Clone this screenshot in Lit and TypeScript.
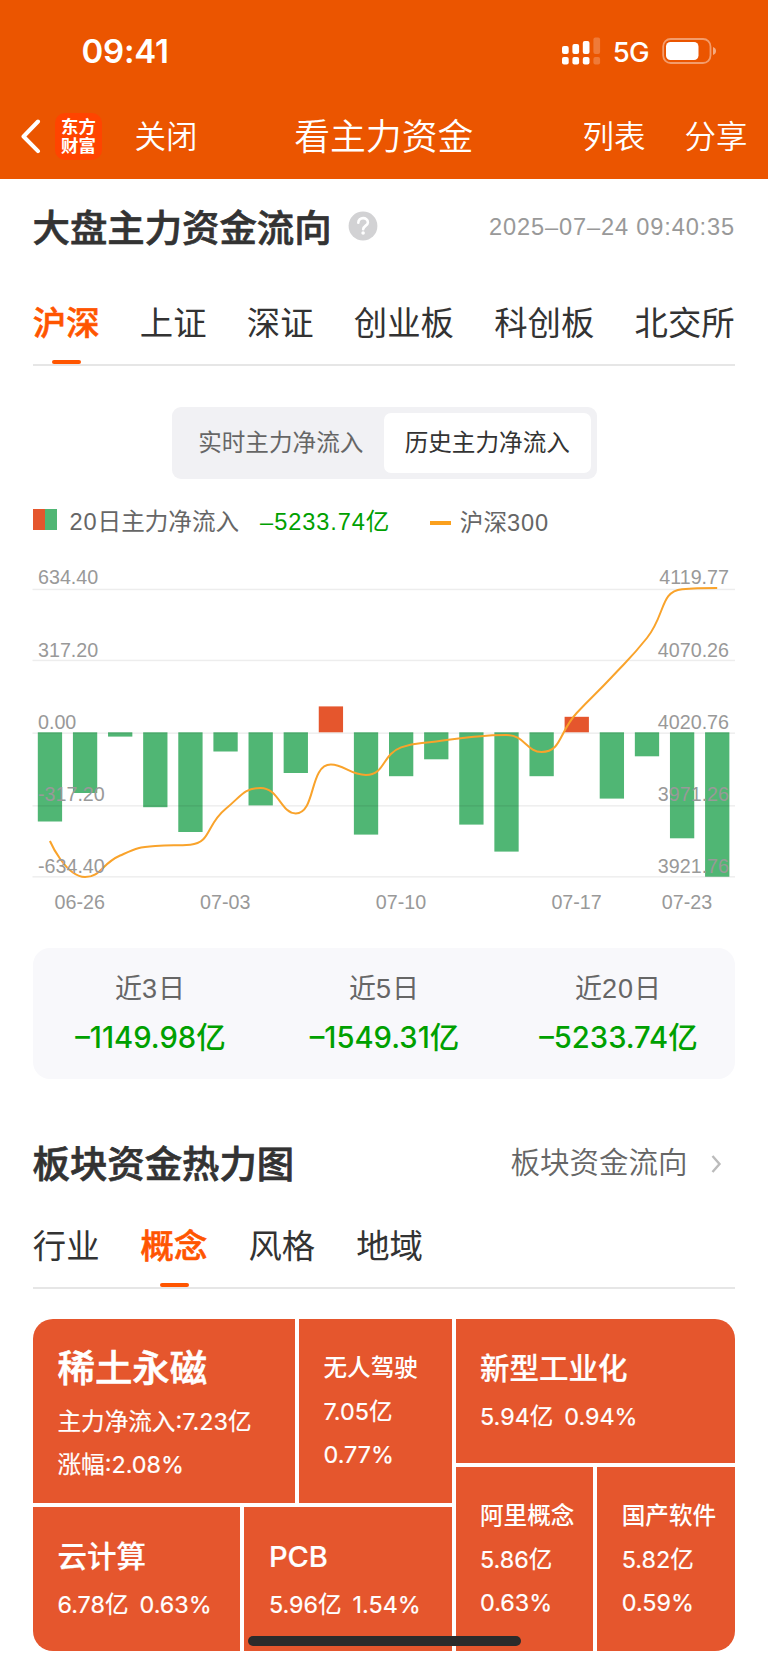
import { LitElement, html, svg, css } from "lit";
import { customElement, property } from "lit/decorators.js";

/** Splits a string so that Latin runs get their own face next to the Chinese text. */
const mix = (text: string) =>
  text
    .split(/([0-9.:%A-Z–]+)/)
    .filter((s) => s !== "")
    .map((s) => (/^[0-9.:%A-Z–]/.test(s) ? html`<span class="n">${s}</span>` : s));

const shared = css`
  * { box-sizing: border-box; }
  .n { font-family: Inter, "Liberation Sans", sans-serif; font-size: 0.985em; line-height: 0; }
`;

@customElement("status-bar")
class StatusBar extends LitElement {
  static styles = [shared, css`
    :host { display: flex; align-items: center; justify-content: space-between; height: 102px; padding: 0 51px 0 81.5px; color: #fff; font-family: Inter, sans-serif; }
    .time { font-size: 33px; font-weight: 600; line-height: 40px; letter-spacing: -0.2px; }
    .right { display: flex; align-items: center; }
    .net { font-size: 27.5px; font-weight: 500; line-height: 34px; margin: 2px 13px 0 12px; letter-spacing: -0.6px; }
    svg { display: block; }
  `];
  render() {
    return html`
      <div class="time">09:41</div>
      <div class="right">
        <svg width="39" height="28" viewBox="0 0 39 28" fill="#fff">
          <rect x="0" y="9" width="6.7" height="8" rx="2" />
          <rect x="10.4" y="7" width="6.7" height="10" rx="2" />
          <rect x="20.8" y="4" width="6.7" height="13" rx="2" />
          <rect x="31.4" y="0.6" width="6.7" height="16.4" rx="2" opacity=".22" />
          <rect x="0" y="20" width="6.7" height="7.6" rx="2" />
          <rect x="10.4" y="20" width="6.7" height="7.6" rx="2" />
          <rect x="20.8" y="20" width="6.7" height="7.6" rx="2" />
          <rect x="31.4" y="20" width="6.7" height="7.6" rx="2" opacity=".22" />
        </svg>
        <span class="net">5G</span>
        <svg width="55" height="26" viewBox="0 0 55 26">
          <rect x="1.2" y="1" width="47.3" height="24" rx="7.5" fill="none" stroke="#fff" stroke-opacity=".42" stroke-width="1.8" />
          <rect x="4" y="4" width="32.5" height="18" rx="4.5" fill="#fff" />
          <path d="M51 9v8c2-.6 3-2.300 3-4s-1-3.400-3-4z" fill="#fff" opacity=".5" />
        </svg>
      </div>
    `;
  }
}

@customElement("nav-bar")
class NavBar extends LitElement {
  static styles = [shared, css`
    :host { display: grid; grid-template-columns: 1fr auto 1fr; align-items: center; height: 68px; padding: 0 20.5px 0 21px; color: #fff; font-size: 31.5px; font-weight: 350; line-height: 46px; }
    .side { display: flex; align-items: center; }
    .end { justify-content: flex-end; gap: 39px; }
    .logo { display: grid; place-content: center; width: 47px; height: 47px; margin: 0 32.5px 0 13px; border-radius: 10px; background: #ff4400; font-size: 17.400px; font-weight: 700; line-height: 19.5px; padding-bottom: 2px; }
    .title { font-size: 35.8px; margin-left: -1px; }
    .t { padding-bottom: 4px; }
    svg { display: block; }
  `];
  render() {
    return html`
      <div class="side">
        <svg width="21" height="36" viewBox="0 0 21 36" fill="none" stroke="#fff" stroke-width="4" stroke-linecap="round" stroke-linejoin="round"><path d="M17 3.500 2.500 18.500 17 33.200" /></svg>
        <div class="logo"><span>东方</span><span>财富</span></div>
        <span class="t">关闭</span>
      </div>
      <div class="title t">看主力资金</div>
      <div class="side end"><span class="t">列表</span><span class="t">分享</span></div>
    `;
  }
}

@customElement("tab-row")
class TabRow extends LitElement {
  @property({ type: Array }) items: string[] = [];
  @property({ type: Number }) active = 0;
  @property({ type: Boolean, reflect: true }) spread = false;
  static styles = [shared, css`
    :host { display: flex; gap: 41px; height: 84px; border-bottom: 2px solid #e6e6e6; font-size: 33.400px; color: #333; }
    :host([spread]) { gap: 0; justify-content: space-between; }
    .tab { display: flex; flex-direction: column; align-items: center; justify-content: space-between; height: 82px; line-height: 78px; white-space: nowrap; }
    .label { height: 70px; margin: 0 0.2px 0 -0.2px; }
    .on { color: #ff5500; font-weight: 500; -webkit-text-stroke: 0.6px #ff5500; }
    .bar { width: 29px; height: 4px; border-radius: 2px; background: #ff5500; }
  `];
  render() {
    return this.items.map(
      (t, i) => html`<div class="tab ${i === this.active ? "on" : ""}"><span class="label">${t}</span>${i === this.active ? html`<i class="bar"></i>` : ""}</div>`
    );
  }
}

type Pt = [number, number];

/** Smooth path whose control points never overshoot the neighbouring values. */
function smoothPath(p: Pt[]): string {
  const clamp = (v: number, a: number, b: number) => Math.max(Math.min(a, b), Math.min(Math.max(a, b), v));
  const k = 0.5;
  let d = `M${p[0][0]},${p[0][1]}`;
  let c0: Pt = p[0];
  for (let i = 1; i < p.length; i++) {
    const prev = p[i - 1], cur = p[i], next = p[i + 1];
    let c1: Pt = cur;
    let n0: Pt = cur;
    if (next) {
      const lp = Math.hypot(cur[0] - prev[0], cur[1] - prev[1]);
      const ln = Math.hypot(next[0] - cur[0], next[1] - cur[1]);
      const r = ln / (ln + lp);
      n0 = [0, 1].map((a) => clamp(cur[a] + (next[a] - prev[a]) * k * r, next[a], cur[a])) as Pt;
      c1 = [0, 1].map((a) => clamp(cur[a] - ((n0[a] - cur[a]) * lp) / ln, prev[a], cur[a])) as Pt;
      n0 = [0, 1].map((a) => cur[a] + ((cur[a] - c1[a]) * ln) / lp) as Pt;
    }
    d += `C${c0.join()} ${c1.join()} ${cur.join()}`;
    c0 = n0;
  }
  return d;
}

@customElement("flow-chart")
class FlowChart extends LitElement {
  // Bar ends and line points, in chart pixels below the top edge (y = 0 of the drawing).
  private zero = 182.3;
  private bars = [271.5, 243, 186.6, 257.2, 282, 201.5, 255.4, 223, 156.4, 284.6, 226.2, 209.3, 274.6, 301.6, 226.2, 166.8, 248.6, 206.3, 288.3, 326.7];
  private line = [291, 327, 305.5, 296, 294.700, 259, 238, 263.4, 214.6, 225, 197.4, 191.6, 187, 185, 202, 163, 127, 88, 39.2, 38];
  static styles = css`
    :host { display: block; height: 370px; }
    svg { display: block; overflow: visible; }
    text { font: 19.7px "Liberation Sans", Arial, sans-serif; fill: #999; }
  `;
  render() {
    const x = (i: number) => 4.8 + 35.12 * i;
    const rows = [39.3, 110.3, 183, 255.7, 326.700];
    const left = ["634.40", "317.20", "0.00", "-317.20", "-634.40"];
    const right = ["4119.77", "4070.26", "4020.76", "3971.26", "3921.76"];
    const base = [34, 106.5, 179, 250.700, 323];
    const dates: [number, string][] = [[46.7, "06-26"], [192.3, "07-03"], [368, "07-10"], [543.6, "07-17"], [654, "07-23"]];
    return html`<svg width="702" height="370" viewBox="0 0 702 370">
      ${this.bars.map((v, i) => svg`<rect x=${x(i)} y=${Math.min(v, this.zero)} width="24.3" height=${Math.abs(v - this.zero)} fill=${v < this.zero ? "#e5562d" : "#50b674"} />`)}
      ${rows.map((y) => svg`<rect x="-0.5" y=${y - 0.6} width="702.5" height="1.5" fill="#000" fill-opacity=".07" />`)}
      <path d=${smoothPath(this.line.map((y, i) => [x(i) + 12.1, y] as Pt))} fill="none" stroke="#f9a32b" stroke-width="2" />
      ${left.map((t, i) => svg`<text x="5" y=${base[i]}>${t}</text>`)}
      ${right.map((t, i) => svg`<text x="696" y=${base[i]} text-anchor="end">${t}</text>`)}
      ${dates.map(([cx, t]) => svg`<text x=${cx} y="358.700" text-anchor="middle">${t}</text>`)}
    </svg>`;
  }
}

@customElement("heat-tile")
class HeatTile extends LitElement {
  @property() name = "";
  @property() size: "l" | "m" | "s" = "s";
  @property({ type: Array }) lines: string[] = [];
  static styles = [shared, css`
    :host { display: block; background: #e5562d; color: #fff; padding-left: 24.5px; font-size: 23.6px; white-space: nowrap; overflow: hidden; }
    .name { font-weight: 500; }
    .l { font-size: 37.400px; line-height: 56px; padding-top: 19px; margin-bottom: 5px; -webkit-text-stroke: 0.6px #fff; }
    .m { font-size: 29.5px; line-height: 44px; padding-top: 25px; margin-bottom: 5.800px; -webkit-text-stroke: 0.2px #fff; }
    .s { line-height: 43.600px; padding-top: 26px; }
    .row { line-height: 43.400px; -webkit-text-stroke: 0.2px #fff; }
    .row .n { font-size: 0.99em; }
    .gap { margin-left: 11px; }
  `];
  render() {
    return html`
      <div class="name ${this.size}">${mix(this.name)}</div>
      ${this.lines.map((l) => html`<div class="row">${l.split(" ").map((p, i) => html`<span class=${i ? "gap" : ""}>${mix(p)}</span>`)}</div>`)}
    `;
  }
}

@customElement("app-root")
class AppRoot extends LitElement {
  static styles = [shared, css`
    :host { display: block; position: relative; width: 768px; height: 1663px; overflow: hidden; background: #fff; color: #333; font-family: "Noto Sans CJK SC", "Liberation Sans", sans-serif; }
    .top { height: 179px; background: #eb5500; }
    .page { padding: 0 33px; }
    .head { display: flex; align-items: center; height: 103px; padding-bottom: 9px; }
    h2 { margin: 0 0 0 -0.5px; font-size: 37.400px; font-weight: 500; line-height: 54px; -webkit-text-stroke: 0.7px #333; }
    .help { margin: 0 auto 0 16.5px; display: block; }
    .date { font: 23.600px/30px "Liberation Sans", sans-serif; letter-spacing: 0.86px; color: #999; margin: 1px 0 0 0; }
    .seg { display: grid; grid-template-columns: 1fr 1fr; width: 425px; height: 72px; margin: 41px auto 0; padding: 6px; border-radius: 9px; background: #f1f1f4; font-size: 23.600px; line-height: 57px; text-align: center; color: #666; }
    .seg .on { background: #fff; border-radius: 7px; color: #333; }
    .legend { display: flex; align-items: center; height: 60px; margin-top: 11px; font-size: 23.600px; line-height: 36px; color: #666; white-space: nowrap; padding-bottom: 1px; }
    .swatch { width: 24px; height: 21px; background: linear-gradient(90deg, #e5562d 50%, #50b674 50%); margin-right: 12.5px; }
    .legend .v { color: #00a000; margin-left: 21px; }
    .key { width: 21px; height: 4px; background: #fba01d; margin: 6px 9px 0 40.5px; }
    .legend .hs { margin-top: 3px; }
    .legend .n { font-family: "Liberation Sans", sans-serif; font-size: 1em; letter-spacing: 0.038em; }
    .sum { display: grid; grid-template-columns: repeat(3, 1fr); height: 131.5px; margin-top: 27.5px; padding-top: 15px; border-radius: 17px; background: #f8f8fb; text-align: center; }
    .sum .k { font-size: 27px; line-height: 47px; color: #666; }
    .sum .k .n { font-family: "Liberation Sans", sans-serif; font-size: 1em; letter-spacing: 0.035em; }
    .sum .v { font-size: 29.5px; line-height: 50px; font-weight: 500; color: #00a000; padding-left: 1px; }
    .sum .v .n { font-size: 0.99em; }
    .head2 { display: flex; align-items: center; justify-content: space-between; height: 60px; margin-top: 53px; padding: 0 13px 1px 0; }
    .link { display: flex; align-items: center; gap: 23.5px; font-size: 29.5px; line-height: 42px; color: #666; font-weight: 350; }
    .link span { padding-bottom: 3px; }
    .tabs2 { margin-top: 12.5px; }
    .map { display: grid; grid-template-columns: 418.5fr 279.5fr; gap: 4px; height: 332px; margin-top: 30.5px; border-radius: 20px; overflow: hidden; }
    .lcol { display: grid; grid-template-rows: 184.400px 1fr; gap: 4px; }
    .rcol { display: grid; grid-template-rows: 144px 1fr; gap: 4px; }
    .r1 { display: grid; grid-template-columns: 262px 1fr; gap: 4px; }
    .r2 { display: grid; grid-template-columns: 207.400px 1fr; gap: 4px; }
    .r3 { display: grid; grid-template-columns: 1fr 1fr; gap: 4px; }
    .home { position: absolute; left: 247.5px; top: 1636px; width: 273.5px; height: 10px; border-radius: 5px; background: #2b2b2b; }
  `];
  render() {
    const sums = [["近3日", "–1149.98亿"], ["近5日", "–1549.31亿"], ["近20日", "–5233.74亿"]];
    return html`
      <header class="top"><status-bar></status-bar><nav-bar></nav-bar></header>
      <main class="page">
        <div class="head">
          <h2>大盘主力资金流向</h2>
          <svg class="help" width="30" height="30" viewBox="0 0 30 30">
            <circle cx="15" cy="15" r="14.400" fill="#d2d2d4" />
            <path d="M10.300 11.800c0-6.200 9.600-6.200 9.600-.4 0 3.200-4.500 3.200-4.700 6.900" fill="none" stroke="#fff" stroke-width="2.600" stroke-linecap="round" />
            <circle cx="15.100" cy="22" r="1.800" fill="#fff" />
          </svg>
          <span class="date">2025–07–24 09:40:35</span>
        </div>
        <tab-row spread .items=${["沪深", "上证", "深证", "创业板", "科创板", "北交所"]} .active=${0}></tab-row>
        <div class="seg"><span>实时主力净流入</span><span class="on">历史主力净流入</span></div>
        <div class="legend">
          <i class="swatch"></i><span>${mix("20日主力净流入")}</span><span class="v">${mix("–5233.74亿")}</span>
          <i class="key"></i><span class="hs">${mix("沪深300")}</span>
        </div>
        <flow-chart></flow-chart>
        <div class="sum">
          ${sums.map(([k, v]) => html`<div><div class="k">${mix(k)}</div><div class="v">${mix(v)}</div></div>`)}
        </div>
        <div class="head2">
          <h2>板块资金热力图</h2>
          <div class="link"><span>板块资金流向</span>
            <svg width="11" height="22" viewBox="0 0 11 22" fill="none" stroke="#bbb" stroke-width="2.400"><path d="M1.500 5 8.500 13 1.500 21" /></svg>
          </div>
        </div>
        <tab-row class="tabs2" .items=${["行业", "概念", "风格", "地域"]} .active=${1}></tab-row>
        <div class="map">
          <div class="lcol">
            <div class="r1">
              <heat-tile size="l" name="稀土永磁" .lines=${["主力净流入:7.23亿", "涨幅:2.08%"]}></heat-tile>
              <heat-tile name="无人驾驶" .lines=${["7.05亿", "0.77%"]}></heat-tile>
            </div>
            <div class="r2">
              <heat-tile size="m" name="云计算" .lines=${["6.78亿 0.63%"]}></heat-tile>
              <heat-tile size="m" name="PCB" .lines=${["5.96亿 1.54%"]}></heat-tile>
            </div>
          </div>
          <div class="rcol">
            <heat-tile size="m" name="新型工业化" .lines=${["5.94亿 0.94%"]}></heat-tile>
            <div class="r3">
              <heat-tile name="阿里概念" .lines=${["5.86亿", "0.63%"]}></heat-tile>
              <heat-tile name="国产软件" .lines=${["5.82亿", "0.59%"]}></heat-tile>
            </div>
          </div>
        </div>
      </main>
      <div class="home"></div>
    `;
  }
}
